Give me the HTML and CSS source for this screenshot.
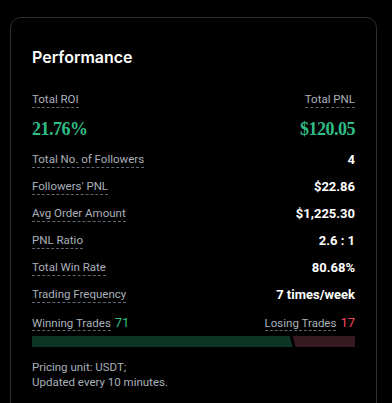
FILE: index.html
```html
<!DOCTYPE html>
<html lang="en">
<head>
  <meta charset="UTF-8">
  <meta name="viewport" content="width=device-width, initial-scale=1.0">
  <title>Performance</title>
  <link rel="stylesheet" href="styles.css">
</head>
<body>
  <div class="card">
    <h2 class="title">Performance</h2>

    <div class="top-row">
      <span class="label">Total ROI</span>
      <span class="label">Total PNL</span>
    </div>
    <div class="top-row big">
      <span>21.76%</span>
      <span>$120.05</span>
    </div>

    <div class="row">
      <span class="label">Total No. of Followers</span>
      <span class="value">4</span>
    </div>
    <div class="row">
      <span class="label">Followers' PNL</span>
      <span class="value">$22.86</span>
    </div>
    <div class="row">
      <span class="label">Avg Order Amount</span>
      <span class="value">$1,225.30</span>
    </div>
    <div class="row">
      <span class="label">PNL Ratio</span>
      <span class="value">2.6 : 1</span>
    </div>
    <div class="row">
      <span class="label">Total Win Rate</span>
      <span class="value">80.68%</span>
    </div>
    <div class="row">
      <span class="label">Trading Frequency</span>
      <span class="value">7 times/week</span>
    </div>
    <div class="row">
      <span><span class="label">Winning Trades</span> <span class="win">71</span></span>
      <span><span class="label">Losing Trades</span> <span class="lose">17</span></span>
    </div>

    <div class="bar">
      <div class="bar-win" style="width:80.7%"></div>
      <div class="bar-lose"></div>
    </div>

    <p class="note">Pricing unit: USDT;<br>Updated every 10 minutes.</p>
  </div>
</body>
</html>
```

FILE: styles.css
```css
body
{
  margin:0;
  padding:17px 15px 0 10px;
  background-color:#000;
  font-family:Roboto, 'Liberation Sans', sans-serif;
  color:#eaecef;
  height:403px;
  box-sizing:border-box;
  overflow:hidden;
}

.card
{
  width:367px;
  box-sizing:border-box;
  border:1px solid #2b2f36;
  border-radius:11px;
  padding:27px 21px 30px 21px;
  background-color:#000;
}

.title
{
  margin:0 0 22px 0;
  font-family:Inter, sans-serif;
  font-size:16px;
  line-height:24px;
  font-weight:600;
  color:#fff;
}

.top-row
{
  display:flex;
  justify-content:space-between;
  align-items:center;
}

.big
{
  margin-top:9px;
  font-family:'Liberation Serif', serif;
  font-weight:bold;
  font-size:18px;
  letter-spacing:-0.5px;
  line-height:24px;
  color:#2ebd85;
}

.row
{
  display:flex;
  justify-content:space-between;
  align-items:center;
  margin-top:10px;
  height:17px;
}

.big + .row
{
  margin-top:10px;
}

.label
{
  font-size:11.5px;
  line-height:16px;
  color:#aab0ba;
  border-bottom:1px dashed #5e6673;
}

.value
{
  font-size:13px;
  font-weight:bold;
  color:#fff;
}

.win
{
  font-size:13px;
  color:#2ebd85;
}

.lose
{
  font-size:13px;
  color:#f6465d;
}

.bar
{
  display:flex;
  height:11px;
  margin-top:6px;
}

.bar-win
{
  background-color:#0c3526;
  clip-path:polygon(0 0, calc(100% - 3px) 0, 100% 100%, 0 100%);
}

.bar-lose
{
  flex:1;
  background-color:#361a1f;
  clip-path:polygon(0 0, 100% 0, 100% 100%, 3px 100%);
}

.note
{
  margin:13px 0 0 0;
  font-size:11.5px;
  line-height:15px;
  color:#aab0ba;
}
```
